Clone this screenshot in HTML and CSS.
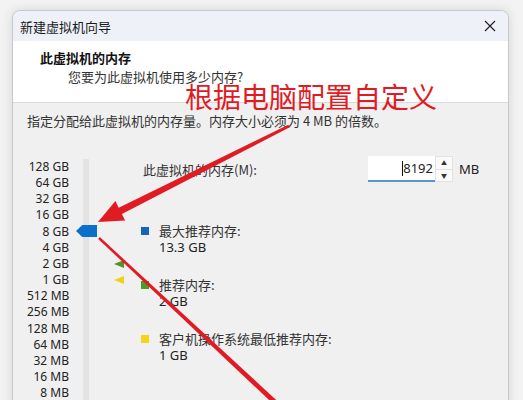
FILE: index.html
```html
<!DOCTYPE html>
<html lang="zh-CN">
<head>
    <meta charset="UTF-8">
    <meta name="viewport" content="width=device-width, initial-scale=1.0">
    <title>新建虚拟机向导</title>
    <link rel="stylesheet" href="styles.css">
</head>
<body>
    <div class="dialog">
        <div class="titlebar">
            <span class="title">新建虚拟机向导</span>
            <span class="close">
                <svg width="12" height="12" viewBox="0 0 12 12"><path d="M1 1L11 11M11 1L1 11" stroke="#222" stroke-width="1.2" fill="none"/></svg>
            </span>
        </div>
        <div class="header">
            <div class="header-title">此虚拟机的内存</div>
            <div class="header-sub">您要为此虚拟机使用多少内存?</div>
        </div>
        <div class="body">
            <p class="desc">指定分配给此虚拟机的内存量。内存大小必须为 4 MB 的倍数。</p>
            <div class="main">
                <div class="scale">
                    <div class="labels">
                        <div>128 GB</div>
                        <div>64 GB</div>
                        <div>32 GB</div>
                        <div>16 GB</div>
                        <div>8 GB</div>
                        <div>4 GB</div>
                        <div>2 GB</div>
                        <div>1 GB</div>
                        <div>512 MB</div>
                        <div>256 MB</div>
                        <div>128 MB</div>
                        <div>64 MB</div>
                        <div>32 MB</div>
                        <div>16 MB</div>
                        <div>8 MB</div>
                    </div>
                    <div class="slider">
                        <div class="track"></div>
                        <div class="thumb" style="top: 66px"></div>
                    </div>
                    <div class="marks">
                        <span class="mark mark-green" style="top: 101px"></span>
                        <span class="mark mark-yellow" style="top: 117px"></span>
                    </div>
                </div>
                <div class="panel">
                    <div class="mem-row">
                        <label class="mem-label">此虚拟机的内存(M):</label>
                        <div class="spin">
                            <div class="spin-input"><span class="caret"></span>8192</div>
                            <div class="spin-btns">
                                <span class="spin-btn">&#9650;</span>
                                <span class="spin-btn">&#9660;</span>
                            </div>
                        </div>
                        <span class="unit">MB</span>
                    </div>
                    <ul class="legend">
                        <li>
                            <span class="swatch blue"></span>
                            <div>
                                <div class="legend-name">最大推荐内存:</div>
                                <div class="legend-value">13.3 GB</div>
                            </div>
                        </li>
                        <li>
                            <span class="swatch green"></span>
                            <div>
                                <div class="legend-name">推荐内存:</div>
                                <div class="legend-value">2 GB</div>
                            </div>
                        </li>
                        <li>
                            <span class="swatch yellow"></span>
                            <div>
                                <div class="legend-name">客户机操作系统最低推荐内存:</div>
                                <div class="legend-value">1 GB</div>
                            </div>
                        </li>
                    </ul>
                </div>
            </div>
        </div>
    </div>

    <!-- red annotation drawn on top of the screenshot -->
    <div class="note">根据电脑配置自定义</div>
    <svg class="arrows" width="523" height="400" viewBox="0 0 523 400">
        <polygon points="98,222 125.2,220.6 121.9,213.9 289.7,127.3 288.3,124.7 118.7,207.7 115.4,201" fill="#e11b24"/>
        <polygon points="98.2,238.9 99.8,237.1 279.7,403.2 276.3,406.8" fill="#e11b24"/>
    </svg>
</body>
</html>
```

FILE: styles.css
```css
body {
    margin: 0;
    width: 523px;
    height: 400px;
    overflow: hidden;
    background: #f3f3f3;
    font-family: "Noto Sans", "Noto Sans CJK SC", sans-serif;
    font-size: 13px;
    color: #222;
    position: relative;
}
.dialog {
    margin: 10px 0 0 12px;
    width: 495px;
    height: 420px;
    border: 1px solid #c9c9c9;
    border-radius: 8px;
    overflow: hidden;
    background: #f0f0f0;
    box-shadow: 0 0 12px rgba(0, 0, 0, 0.12);
}
.titlebar {
    height: 30px;
    display: flex;
    align-items: center;
    justify-content: space-between;
    padding: 0 12px 0 7px;
    background: #eef1f8;
}
.title {
    font-family: "Noto Sans CJK SC", sans-serif;
    font-size: 13px;
    color: #1a1a1a;
}
.close {
    display: flex;
    width: 12px;
    height: 12px;
}
.header {
    height: 62px;
    box-sizing: border-box;
    padding: 8px 0 0 27px;
    background: #fff;
    border-bottom: 1px solid #dadada;
    font-family: "Noto Sans CJK SC", sans-serif;
    line-height: 17px;
}
.header-title {
    font-weight: bold;
    color: #111;
}
.header-sub {
    margin: 2px 0 0 28px;
    color: #333;
}
.body {
    padding: 9px 0 0 14px;
}
.desc {
    margin: 0;
    line-height: 17px;
    font-family: "Noto Sans CJK SC", sans-serif;
    color: #333;
}
.main {
    display: flex;
    margin-top: 27px;
}
.scale {
    display: flex;
    flex-shrink: 0;
    padding-top: 3px;
}
.labels {
    width: 42px;
    text-align: right;
    white-space: nowrap;
    font-size: 12px;
    line-height: 16.15px;
    color: #222;
}
.slider {
    position: relative;
    width: 38px;
    margin-left: 7px;
}
.track {
    margin-left: 7px;
    width: 6px;
    height: 260px;
    background: #e3e3e3;
}
.thumb {
    position: absolute;
    left: 0;
    width: 21px;
    height: 12px;
    background: #0c6fcb;
    clip-path: polygon(0 50%, 30% 0, 100% 0, 100% 100%, 30% 100%);
}
.marks {
    position: relative;
    width: 27px;
}
.mark {
    position: absolute;
    left: 0;
    width: 10px;
    height: 8px;
    clip-path: polygon(0 50%, 100% 0, 100% 100%);
}
.mark-green {
    background: #4f9424;
}
.mark-yellow {
    background: #f3cf16;
}
.panel {
    flex: 1;
}
.mem-row {
    display: flex;
    align-items: center;
    height: 26px;
}
.mem-label {
    width: 225px;
    padding-left: 2px;
    font-family: "Noto Sans CJK SC", sans-serif;
    color: #333;
}
.spin {
    display: flex;
    height: 26px;
}
.spin-input {
    width: 67px;
    box-sizing: border-box;
    padding: 0 2px 0 0;
    display: flex;
    align-items: center;
    justify-content: flex-end;
    background: #fff;
    border-bottom: 2px solid #5b96c6;
    font-size: 13px;
    color: #222;
}
.caret {
    display: inline-block;
    width: 1px;
    height: 15px;
    background: #111;
}
.spin-btns {
    display: flex;
    flex-direction: column;
    width: 18px;
}
.spin-btn {
    flex: 1;
    display: flex;
    align-items: center;
    justify-content: center;
    background: #fafafa;
    border: 1px solid #e2e2e2;
    font-size: 6px;
    color: #333;
}
.spin-btn + .spin-btn {
    border-top: none;
}
.unit {
    margin-left: 6px;
    color: #222;
}
.legend {
    list-style: none;
    margin: 40px 0 0;
    padding: 0;
}
.legend li {
    display: flex;
    margin-bottom: 20px;
}
.swatch {
    width: 8px;
    height: 8px;
    margin: 5px 10px 0 0;
}
.swatch.blue {
    background: #1565b5;
}
.swatch.green {
    background: #4e9a2a;
}
.swatch.yellow {
    background: #f6d31b;
}
.legend-name {
    line-height: 17px;
    font-family: "Noto Sans CJK SC", sans-serif;
    color: #333;
}
.legend-value {
    line-height: 17px;
}
.note {
    position: absolute;
    left: 185px;
    top: 80px;
    font-family: "Noto Sans CJK SC", sans-serif;
    font-size: 28px;
    line-height: 32px;
    color: #e11b24;
    white-space: nowrap;
}
.arrows {
    position: absolute;
    left: 0;
    top: 0;
    pointer-events: none;
}
```
